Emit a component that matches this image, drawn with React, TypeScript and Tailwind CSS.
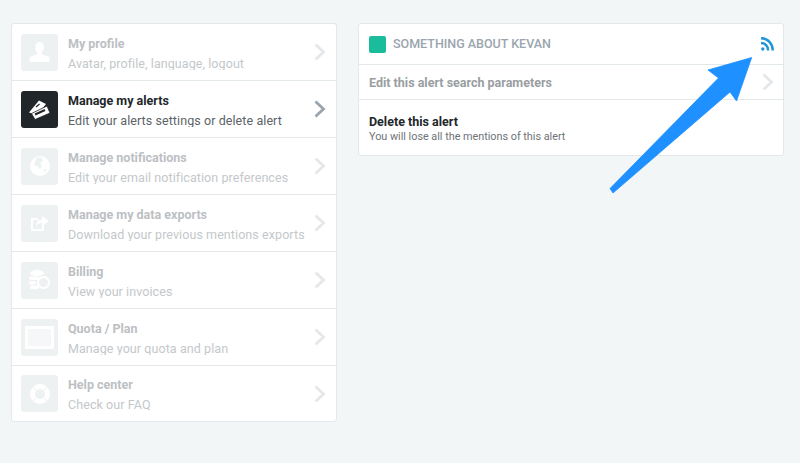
import React from "react";

const Chevron = ({ className }: { className: string }) => (
  <svg width="12" height="18" viewBox="0 0 12 18" fill="none" className={className}>
    <path d="M1.500 1.500l8 7.500-8 7.500" stroke="currentColor" strokeWidth="2.800" />
  </svg>
);

const User = () => (
  <svg width="21" height="20" viewBox="0 0 21 20" fill="white"><path d="M10.500 0c2.800 0 4.300 2.200 4.300 5.200 0 2.300-.8 4-2 5.300v1.800c2.400 1.100 6.800 1.900 7.700 3.700V20H.5v-4c.9-1.800 5.300-2.600 7.700-3.700v-1.800c-1.200-1.300-2-3-2-5.300C6.200 2.200 7.700 0 10.500 0z" /></svg>
);
const Tickets = () => (
  <svg width="37" height="37" viewBox="0 0 37 37">
    <path d="M8 21.500L18 9.500l7 3.500-9 11z" fill="white" />
    <path d="M10.500 22.500l15.500-7.500 3 7-15 6.500z" fill="white" stroke="#20262a" strokeWidth="0.800" />
    <path d="M14 23.500l10-4.500" stroke="#20262a" strokeWidth="2" />
    <path d="M15 16l3.500-3" stroke="#20262a" strokeWidth="1.200" />
  </svg>
);
const Globe = () => (
  <svg width="20" height="20" viewBox="0 0 20 20"><circle cx="10" cy="10" r="10" fill="white" /><path d="M7 1l5 1 1 3-3 2 2 3-2 3-3-3-3-1zM14 13l3 0-3 4z" fill="#eef1f2" /></svg>
);
const Share = () => (
  <svg width="18" height="15" viewBox="0 0 18 15" fill="none"><path d="M7 3H1v11h11V9" stroke="white" strokeWidth="2" /><path d="M11 0l7 5-7 5V7C8 7 6 8 5 11c0-5 2-7 6-7.500z" fill="white" /></svg>
);
const Coins = () => (
  <svg width="21" height="20" viewBox="0 0 21 20" fill="white"><ellipse cx="8" cy="3" rx="7" ry="3" /><rect x="0" y="6.500" width="11" height="3.500" rx="1.700" /><rect x="0" y="11" width="7" height="3.500" rx="1.700" /><rect x="1" y="15.500" width="9" height="3.500" rx="1.700" /><circle cx="14.500" cy="12.500" r="5.500" fill="none" stroke="white" strokeWidth="2" /></svg>
);
const Screen = () => (
  <svg width="29" height="23" viewBox="0 0 29 23" fill="none"><rect x="1.500" y="1.500" width="26" height="20" stroke="white" strokeWidth="3" /><rect x="3" y="3" width="23" height="17" fill="#f5f7f8" /></svg>
);
const Buoy = () => (
  <svg width="20" height="20" viewBox="0 0 20 20" fill="none">
    <circle cx="10" cy="10" r="7.500" stroke="white" strokeWidth="5" />
    <path d="M3 3l3.500 3.500M17 3l-3.500 3.500M3 17l3.500-3.500M17 17l-3.500-3.500" stroke="#eef1f2" strokeWidth="1" />
  </svg>
);

const rows = [
  { icon: <User />, title: "My profile", sub: "Avatar, profile, language, logout", h: "h-[56px]" },
  { icon: <Tickets />, title: "Manage my alerts", sub: "Edit your alerts settings or delete alert", active: true, h: "h-[57px] border-t" },
  { icon: <Globe />, title: "Manage notifications", sub: "Edit your email notification preferences", h: "h-[57px] border-t" },
  { icon: <Share />, title: "Manage my data exports", sub: "Download your previous mentions exports", h: "h-[57px] border-t" },
  { icon: <Coins />, title: "Billing", sub: "View your invoices", h: "h-[57px] border-t" },
  { icon: <Screen />, title: "Quota / Plan", sub: "Manage your quota and plan", h: "h-[57px] border-t" },
  { icon: <Buoy />, title: "Help center", sub: "Check our FAQ", h: "h-[56px] border-t" },
];

export default function App() {
  return (
    <div className="relative flex h-[463px] w-[800px] items-start gap-[21px] overflow-hidden bg-[#f3f6f7] pl-[11px] pt-[23px] font-['Roboto',sans-serif]">
      <div className="w-[326px] overflow-hidden rounded-[3px] border border-[#e3e8eb] bg-white">
        {rows.map((r) => (
          <div key={r.title} className={`flex items-center border-[#e3e8eb] pl-[9px] pr-[10px] ${r.h}`}>
            <div className={`flex h-[37px] w-[37px] shrink-0 items-center justify-center rounded-[3px] ${r.active ? "bg-[#20262a]" : "bg-[#eef1f2]"}`}>{r.icon}</div>
            <div className="ml-[10px] min-w-0 flex-1 pb-[1px]">
              <div className={`h-[20px] text-[12.5px] font-bold leading-[20px] ${r.active ? "text-[#22272b]" : "text-[#bcc0c3]"}`}>{r.title}</div>
              <div className={`h-[16px] overflow-hidden whitespace-nowrap text-[12.5px] leading-[19px] tracking-[0.08px] ${r.active ? "text-[#5c6367]" : "text-[#c3c8cb]"}`}>{r.sub}</div>
            </div>
            <Chevron className={r.active ? "text-[#9aa5ad]" : "text-[#e4e8ea]"} />
          </div>
        ))}
      </div>

      <div className="w-[426px] overflow-hidden rounded-[3px] border border-[#e3e8eb] bg-white">
        <div className="flex h-[40px] items-center pl-[10px] pr-[9px]">
          <div className="h-[17px] w-[17px] rounded-[2px] bg-[#1abc9c]" />
          <div className="ml-[7px] flex-1 text-[12.5px] font-medium text-[#9aa5ad]">SOMETHING ABOUT KEVAN</div>
          <svg width="13" height="14" viewBox="0 0 13 14" fill="none" stroke="#2196d9" strokeWidth="2.500">
            <path d="M0 6a7 7 0 0 1 7 7.500" />
            <path d="M0 1.300a11.700 11.700 0 0 1 11.700 12.200" />
            <circle cx="1.800" cy="12" r="1.700" fill="#2196d9" stroke="none" />
          </svg>
        </div>
        <div className="flex h-[35px] items-center border-t border-[#e3e8eb] pl-[10px] pr-[9px]">
          <div className="flex-1 pt-[3px] text-[12.5px] font-bold text-[#999ea2]">Edit this alert search parameters</div>
          <Chevron className="text-[#e4e8ea]" />
        </div>
        <div className="flex h-[56px] flex-col justify-center border-t border-[#e3e8eb] pl-[10px] pt-[3px]">
          <div className="text-[12.5px] font-bold leading-[14px] text-[#22272b]">Delete this alert</div>
          <div className="text-[10.8px] leading-[15px] text-[#6d7377]">You will lose all the mentions of this alert</div>
        </div>
      </div>

      <svg width="800" height="463" viewBox="0 0 800 463" className="pointer-events-none absolute left-0 top-0">
        <path d="M751.700 57.500L708 70l10.500 8L610 188.500l3 4.500L730 92l6.500 9z" fill="#1e90ff" stroke="#1e90ff" strokeWidth="0.800" strokeLinejoin="round" />
      </svg>
    </div>
  );
}
